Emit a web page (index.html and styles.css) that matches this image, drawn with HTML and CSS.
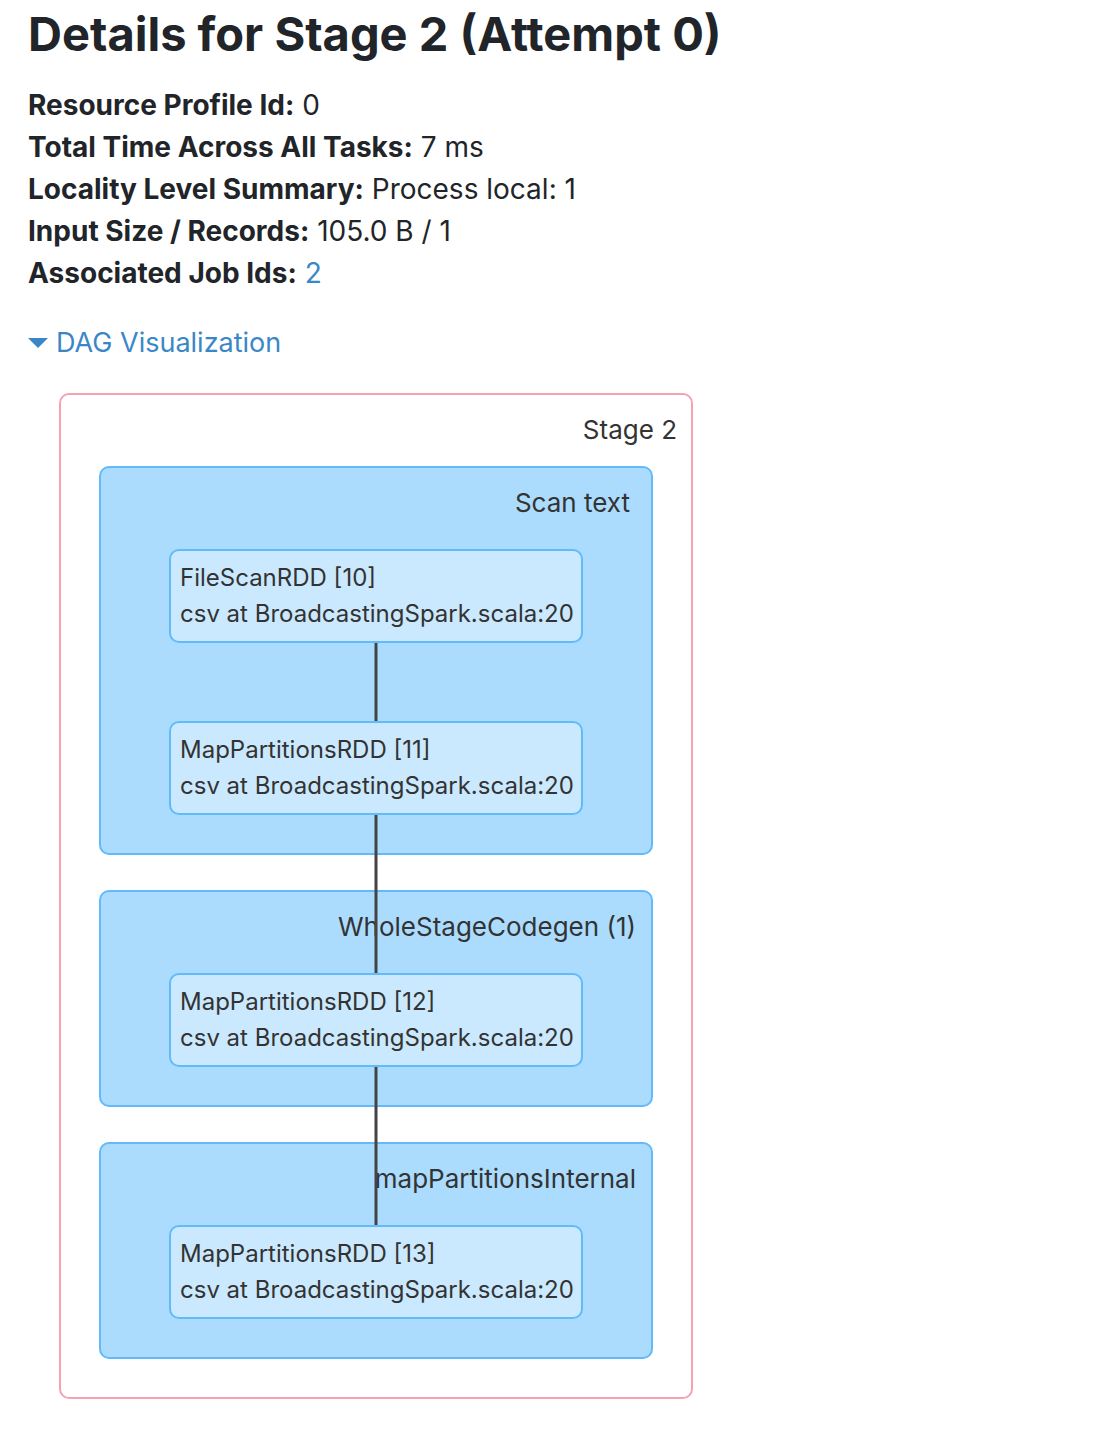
FILE: index.html
```html
<!DOCTYPE html>
<html lang="en">
<head>
<meta charset="utf-8">
<meta name="viewport" content="width=device-width, initial-scale=1">
<title>Details for Stage 2 (Attempt 0)</title>
<link rel="stylesheet" href="styles.css">
</head>
<body>
<main class="page">
  <h1 class="title">Details for Stage 2 (Attempt 0)</h1>

  <ul class="summary">
    <li><strong>Resource Profile Id:</strong> 0</li>
    <li><strong>Total Time Across All Tasks:</strong> 7 ms</li>
    <li><strong>Locality Level Summary:</strong> Process local: 1</li>
    <li><strong>Input Size / Records:</strong> 105.0 B / 1</li>
    <li><strong>Associated Job Ids:</strong> <a href="#job-2">2</a></li>
  </ul>

  <a class="toggle" href="#dag"><span class="arrow"></span>DAG Visualization</a>

  <section class="stage" id="dag">
    <h2 class="label stage-label">Stage 2</h2>
    <div class="clusters">
      <section class="cluster">
        <h3 class="label cluster-label scan-label">Scan text</h3>
        <div class="nodes">
          <div class="node">
            <span>FileScanRDD [10]</span>
            <span>csv at BroadcastingSpark.scala:20</span>
            <svg class="edge" viewBox="0 0 4 78" preserveAspectRatio="none" aria-hidden="true"><path d="M2 0V78"/></svg>
          </div>
          <div class="node">
            <span>MapPartitionsRDD [11]</span>
            <span>csv at BroadcastingSpark.scala:20</span>
            <svg class="edge edge-long" viewBox="0 0 4 158" preserveAspectRatio="none" aria-hidden="true"><path d="M2 0V158"/></svg>
          </div>
        </div>
      </section>
      <section class="cluster">
        <h3 class="label cluster-label">WholeStageCodegen (1)</h3>
        <div class="nodes">
          <div class="node">
            <span>MapPartitionsRDD [12]</span>
            <span>csv at BroadcastingSpark.scala:20</span>
            <svg class="edge edge-long" viewBox="0 0 4 158" preserveAspectRatio="none" aria-hidden="true"><path d="M2 0V158"/></svg>
          </div>
        </div>
      </section>
      <section class="cluster">
        <h3 class="label cluster-label">mapPartitionsInternal</h3>
        <div class="nodes">
          <div class="node">
            <span>MapPartitionsRDD [13]</span>
            <span>csv at BroadcastingSpark.scala:20</span>
          </div>
        </div>
      </section>
    </div>
  </section>
</main>
</body>
</html>
```

FILE: styles.css
```css
* {
  box-sizing: border-box;
}

body {
  margin: 0;
  background: #fff;
  color: #212529;
  font-family: Inter, "Liberation Sans", sans-serif;
  font-size: 27px;
  line-height: 42px;
}

a {
  color: #3a87c8;
  text-decoration: none;
}

.page {
  padding: 4px 28px 39px;
}

.title {
  margin: 0;
  font-size: 47px;
  line-height: 60px;
  font-weight: 700;
}

.summary {
  margin: 20px 0 28px;
  padding: 0;
  list-style: none;
  font-size: 28px;
}

.summary strong {
  font-weight: 700;
}

.toggle {
  display: flex;
  align-items: center;
  gap: 8px;
  width: fit-content;
}

.arrow {
  border: 10px solid transparent;
  border-top-color: currentColor;
  border-bottom: 0;
}

.stage {
  width: fit-content;
  margin: 29px 0 0 31px;
  padding: 15px 38px 38px;
  border: 2px solid #f5a3b3;
  border-radius: 10px;
  color: #333;
}

.label {
  margin: 0;
  font-size: 26px;
  line-height: 40px;
  font-weight: 400;
  text-align: right;
}

.stage-label {
  margin: 0 -24px 16px 0;
}

.clusters {
  display: flex;
  flex-direction: column;
  gap: 35px;
}

.cluster {
  padding: 15px 68px 38px;
  border: 2px solid #62bafa;
  border-radius: 10px;
  background: #abdcfd;
}

.cluster-label {
  margin: 0 -53px 26px 0;
}

.scan-label {
  margin-right: -47px;
}

.nodes {
  display: flex;
  flex-direction: column;
  gap: 78px;
}

.node {
  position: relative;
  display: flex;
  flex-direction: column;
  min-width: 414px;
  padding: 9px 6px 9px 9px;
  border: 2px solid #62bafa;
  border-radius: 10px;
  background: #cbe9fe;
  font-size: 24px;
  line-height: 36px;
  white-space: nowrap;
}

.edge {
  position: absolute;
  top: calc(100% + 2px);
  left: calc(50% - 2px);
  width: 4px;
  height: 78px;
  fill: none;
  stroke: #444;
  stroke-width: 3px;
}

.edge-long {
  height: 158px;
}
```
